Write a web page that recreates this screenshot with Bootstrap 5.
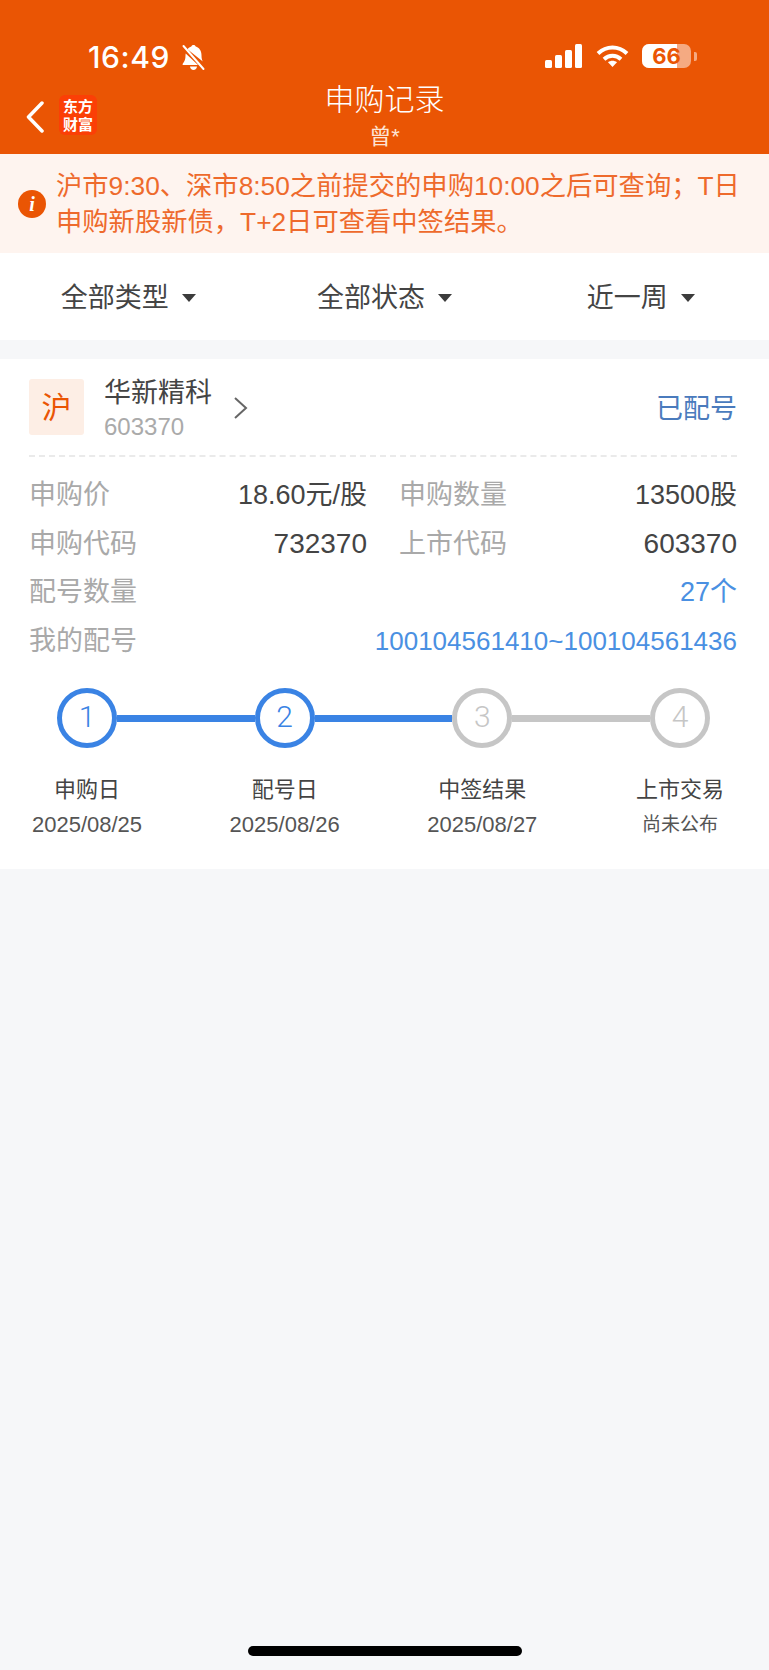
<!DOCTYPE html>
<html lang="zh-CN">
<head>
    <meta charset="UTF-8">
    <meta name="viewport" content="width=device-width, initial-scale=1.0">
    <title>申购记录</title>
    <link href="https://cdn.jsdelivr.net/npm/bootstrap@5.3.0/dist/css/bootstrap.min.css" rel="stylesheet">
    <style>
        html, body { height: 100%; }
        body {
            font-family: "Liberation Sans", "Noto Sans CJK SC", sans-serif;
            background: #f6f7f9;
            min-height: 1670px;
            overflow: hidden;
            color: #444;
        }
        .top-head { background: #ea5504; color: #fff; height: 154px; }
        .status-row { height: 82px; padding: 40px 72px 0 88px; }
        .clock { font-family: Inter, sans-serif; font-size: 30px; font-weight: 500; line-height: 34px; letter-spacing: 0.6px; }
        .bell-off { margin: 4px 0 0 10px; }
        .status-right { margin-top: 4px; }
        .batt { position: relative; width: 49px; height: 24px; margin-left: 13px; border-radius: 7px; background: rgba(255,255,255,.5); overflow: hidden; }
        .batt-fill { width: 35px; height: 24px; background: #fff; }
        .batt-num { position: absolute; left: 0; right: 0; top: 0; text-align: center; font: 700 22px/24px Inter, sans-serif; color: #ea5504; }
        .batt-nub { width: 3px; height: 9px; margin-left: 3px; border-radius: 0 2px 2px 0; background: rgba(255,255,255,.5); }
        .wifi-mark { margin-left: 14px; }
        .nav-row { display: grid; grid-template-columns: 1fr auto 1fr; height: 72px; padding: 0 26px; }
        .back-arrow { margin-top: 19px; }
        .brand-mark {
            width: 38px; height: 40px; margin: 13px 0 0 15px; border-radius: 6px; background: #fb3f06;
            font: 700 15px/18px "Noto Sans CJK SC", sans-serif; text-align: center; padding-top: 2px;
        }
        .head-title { font-size: 30px; line-height: 36px; font-weight: 300; }
        .head-sub { font-size: 22px; line-height: 26px; margin-top: 6px; color: #fde3d3; }
        .notice-bar { background: #fef4ef; color: #ee6a2c; height: 99px; padding: 1px 20px 0 18px; font-size: 26.300px; line-height: 36px; }
        .notice-icon {
            flex: 0 0 28px; width: 28px; height: 28px; margin-right: 10px; border-radius: 50%; background: #ea5504; color: #fff;
            font: italic 700 20px/28px "Liberation Serif", serif; text-align: center;
        }
        .filter-row { background: #fff; height: 87px; margin-bottom: 19px; padding-top: 3px; font-size: 27px; color: #444; }
        .caret-down { width: 0; height: 0; margin-left: 13px; border-left: 7px solid transparent; border-right: 7px solid transparent; border-top: 8px solid #3c3c3c; }
        .sub-card { background: #fff; height: 510px; padding: 20px 32px 0 29px; }
        .market-tag {
            width: 55px; height: 56px; background: #fdeee5; color: #ea5504; border-radius: 3px;
            font-size: 30px; line-height: 58px; text-align: center;
        }
        .stock-name { font-size: 27px; line-height: 30px; margin-top: -1px; }
        .stock-code { font-size: 24px; line-height: 28px; margin-top: 5px; color: #aaa; }
        .chev-go { margin: 17px 0 0 21px; }
        .state-text { font-size: 27px; color: #4a7bbd; margin-top: 10px; }
        .dash-line { border-top: 2px dashed #eaeaea; margin: 14px 0 15px; }
        .info-row { height: 48.600px; font-size: 27px; line-height: 46px; white-space: nowrap; }
        .info-cell { width: 338px; }
        .info-label { color: #a9a9a9; }
        .info-val { color: #444; }
        .info-num { font-size: 28px; }
        .info-blue { color: #4a90e2; }
        .info-long { font-size: 26px; }
        .step-track { padding: 22px 27px 0 28px; }
        .step-dot {
            flex: 0 0 60px; width: 60px; height: 60px; border-radius: 50%; background: #fff; border: 5px solid #c6c6c6;
            color: #c6c6c6; font: 300 30px/48px Roboto, sans-serif; text-align: center;
        }
        .step-dot.on { border-color: #3a83e4; color: #3a83e4; }
        .step-link { flex: 1 1 0; height: 7px; background: #c6c6c6; }
        .step-link.on { background: #3a83e4; }
        .step-labels { margin: 27px -1px 0 0; }
        .step-item { width: 116px; text-align: center; }
        .step-name { font-size: 22px; line-height: 30px; color: #444; }
        .step-date { font-size: 22px; line-height: 26px; margin-top: 7px; color: #555; white-space: nowrap; }
        .step-tbd { font-size: 19px; }
        .page-fill { flex: 1 1 auto; }
        .home-bar { width: 274px; height: 10px; margin: 0 auto 14px; border-radius: 5px; background: #000; }
    </style>
</head>
<body class="d-flex flex-column">
    <header class="top-head">
        <div class="status-row d-flex align-items-start">
            <span class="clock">16:49</span>
            <svg class="bell-off" width="27" height="27" viewBox="0 0 26 27" fill="#fff">
                <path d="M5.200 9.500L17.500 21H3c-1 0-1.200-1-.6-1.600C4.200 17.500 5 15 5 11.500c0-.7.100-1.400.2-2z"/>
                <path d="M7 5.200C8 3.800 9.400 3 10.800 2.600 11 1.500 11.800 1 13 1s2 .5 2.200 1.600C18.800 3.600 21 7 21 11.500c0 2.500.4 4.300 1.300 5.900z"/>
                <path d="M9.500 22.500h7c-.2 2-1.700 3.500-3.500 3.500s-3.300-1.500-3.500-3.500z"/>
                <path d="M3 2l20 23" stroke="#fff" stroke-width="2" stroke-linecap="round"/>
            </svg>
            <div class="status-right ms-auto d-flex align-items-center">
                <svg width="37" height="24" viewBox="0 0 37 24" fill="#fff">
                    <rect x="0" y="16" width="7" height="8" rx="1.500"/>
                    <rect x="10" y="11" width="7" height="13" rx="1.500"/>
                    <rect x="20" y="6" width="7" height="18" rx="1.500"/>
                    <rect x="30" y="0" width="7" height="24" rx="1.500"/>
                </svg>
                <svg class="wifi-mark" width="33" height="22" viewBox="0 0 33 22" fill="none" stroke="#fff" stroke-width="4">
                    <path d="M2 8.500C10.500 .5 22.500 .5 31 8.500"/>
                    <path d="M8 14.200c5-4.500 12-4.500 17 0"/>
                    <path d="M16.500 22l-4.500-4.800c2.700-2 6.300-2 9 0z" fill="#fff" stroke="none"/>
                </svg>
                <div class="batt">
                    <div class="batt-fill"></div>
                    <div class="batt-num">66</div>
                </div>
                <div class="batt-nub"></div>
            </div>
        </div>
        <div class="nav-row">
            <div class="d-flex align-items-start">
                <svg class="back-arrow" width="18" height="32" viewBox="0 0 18 32" fill="none" stroke="#fff" stroke-width="3.500" stroke-linecap="round" stroke-linejoin="round">
                    <path d="M16 2L2.500 16 16 30"/>
                </svg>
                <div class="brand-mark"><div>东方</div><div>财富</div></div>
            </div>
            <div class="text-center">
                <div class="head-title">申购记录</div>
                <div class="head-sub">曾*</div>
            </div>
            <div></div>
        </div>
    </header>

    <div class="notice-bar d-flex align-items-center">
        <div class="notice-icon">i</div>
        <div>沪市9:30、深市8:50之前提交的申购10:00之后可查询；T日申购新股新债，T+2日可查看中签结果。</div>
    </div>

    <div class="filter-row row g-0 align-items-center">
        <div class="col-4 d-flex justify-content-center align-items-center">全部类型<span class="caret-down"></span></div>
        <div class="col-4 d-flex justify-content-center align-items-center">全部状态<span class="caret-down"></span></div>
        <div class="col-4 d-flex justify-content-center align-items-center">近一周<span class="caret-down"></span></div>
    </div>

    <section class="sub-card">
        <div class="d-flex align-items-start">
            <div class="market-tag">沪</div>
            <div class="ms-3 ps-1">
                <div class="stock-name">华新精科</div>
                <div class="stock-code">603370</div>
            </div>
            <svg class="chev-go" width="15" height="24" viewBox="0 0 15 24" fill="none" stroke="#666" stroke-width="2">
                <path d="M2 2l11 10L2 22"/>
            </svg>
            <div class="state-text ms-auto">已配号</div>
        </div>
        <div class="dash-line"></div>

        <div class="info-row d-flex justify-content-between">
            <div class="info-cell d-flex justify-content-between"><span class="info-label">申购价</span><span class="info-val">18.60元/股</span></div>
            <div class="info-cell d-flex justify-content-between"><span class="info-label">申购数量</span><span class="info-val">13500股</span></div>
        </div>
        <div class="info-row d-flex justify-content-between">
            <div class="info-cell d-flex justify-content-between"><span class="info-label">申购代码</span><span class="info-val info-num">732370</span></div>
            <div class="info-cell d-flex justify-content-between"><span class="info-label">上市代码</span><span class="info-val info-num">603370</span></div>
        </div>
        <div class="info-row d-flex justify-content-between"><span class="info-label">配号数量</span><span class="info-blue">27个</span></div>
        <div class="info-row d-flex justify-content-between"><span class="info-label">我的配号</span><span class="info-blue info-long">100104561410~100104561436</span></div>

        <div class="step-track d-flex align-items-center">
            <div class="step-dot on">1</div>
            <div class="step-link on"></div>
            <div class="step-dot on">2</div>
            <div class="step-link on"></div>
            <div class="step-dot">3</div>
            <div class="step-link"></div>
            <div class="step-dot">4</div>
        </div>
        <div class="step-labels d-flex justify-content-between">
            <div class="step-item"><div class="step-name">申购日</div><div class="step-date">2025/08/25</div></div>
            <div class="step-item"><div class="step-name">配号日</div><div class="step-date">2025/08/26</div></div>
            <div class="step-item"><div class="step-name">中签结果</div><div class="step-date">2025/08/27</div></div>
            <div class="step-item"><div class="step-name">上市交易</div><div class="step-date step-tbd">尚未公布</div></div>
        </div>
    </section>

    <div class="page-fill"></div>
    <div class="home-bar"></div>

    <script src="https://cdn.jsdelivr.net/npm/bootstrap@5.3.0/dist/js/bootstrap.bundle.min.js"></script>
</body>
</html>
